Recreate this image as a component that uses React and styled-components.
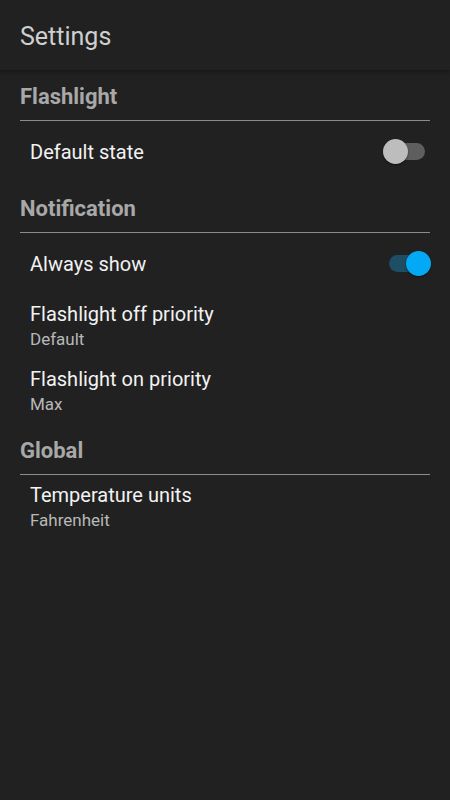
import React, { useState } from 'react';
import styled, { createGlobalStyle } from 'styled-components';

const GlobalStyle = createGlobalStyle`
  html, body {
    margin: 0;
    padding: 0;
    background: #212121;
  }
  body {
    font-family: Roboto, 'Noto Sans', sans-serif;
  }
`;

const Screen = styled.div`
  width: 450px;
  min-height: 800px;
  background: #212121;
`;

const Toolbar = styled.div`
  height: 70px;
  display: flex;
  align-items: center;
  padding: 0 20px;
  background: #212121;
  box-shadow: 0 2px 4px rgba(0, 0, 0, 0.35);
  position: relative;
  z-index: 1;
`;

const Title = styled.h1`
  margin: 0;
  font-size: 25px;
  font-weight: 400;
  color: #cfcfcf;
  line-height: 30px;
  padding-top: 3px;
`;

const Section = styled.section`
  padding: 0 20px;
`;

const Header = styled.div`
  padding: 15px 0 11px;
  font-size: 22px;
  line-height: 24px;
  font-weight: 700;
  color: #a8a8a8;
  border-bottom: 1px solid #8c8c8c;
`;

const Row = styled.div`
  display: flex;
  align-items: center;
  justify-content: space-between;
  padding: 0 4px 0 10px;
  height: ${p => (p.$tall ? 65 : 61)}px;
`;

const Texts = styled.div`
  display: flex;
  flex-direction: column;
  padding-top: 1px;
`;

const Label = styled.div`
  font-size: 20px;
  line-height: 24px;
  color: #f2f2f2;
`;

const Summary = styled.div`
  font-size: 17px;
  line-height: 26px;
  color: #b8b8b8;
`;

const Track = styled.button`
  position: relative;
  width: 36px;
  height: 17px;
  border: none;
  padding: 0;
  border-radius: 9px;
  background: ${p => (p.$on ? '#1e4d66' : '#5e5e5e')};
  cursor: pointer;
  margin-right: 1px;
`;

const Thumb = styled.span`
  position: absolute;
  top: 50%;
  left: ${p => (p.$on ? '17px' : '-6px')};
  width: 25px;
  height: 25px;
  margin-top: -12.5px;
  border-radius: 50%;
  background: ${p => (p.$on ? '#03a9f4' : '#bdbdbd')};
  box-shadow: 0 1px 2px rgba(0, 0, 0, 0.5);
`;

const Switch = ({ on, onToggle }) => (
  <Track $on={on} onClick={onToggle}>
    <Thumb $on={on} />
  </Track>
);

const App = () => {
  const [flashDefault, setFlashDefault] = useState(false);
  const [alwaysShow, setAlwaysShow] = useState(true);

  return (
    <Screen>
      <GlobalStyle />
      <Toolbar>
        <Title>Settings</Title>
      </Toolbar>

      <Section>
        <Header>Flashlight</Header>
        <Row>
          <Texts>
            <Label>Default state</Label>
          </Texts>
          <Switch on={flashDefault} onToggle={() => setFlashDefault(v => !v)} />
        </Row>
      </Section>

      <Section>
        <Header>Notification</Header>
        <Row>
          <Texts>
            <Label>Always show</Label>
          </Texts>
          <Switch on={alwaysShow} onToggle={() => setAlwaysShow(v => !v)} />
        </Row>
        <Row $tall>
          <Texts>
            <Label>Flashlight off priority</Label>
            <Summary>Default</Summary>
          </Texts>
        </Row>
        <Row $tall>
          <Texts>
            <Label>Flashlight on priority</Label>
            <Summary>Max</Summary>
          </Texts>
        </Row>
      </Section>

      <Section>
        <Header>Global</Header>
        <Row $tall>
          <Texts>
            <Label>Temperature units</Label>
            <Summary>Fahrenheit</Summary>
          </Texts>
        </Row>
      </Section>
    </Screen>
  );
};

export default App;
